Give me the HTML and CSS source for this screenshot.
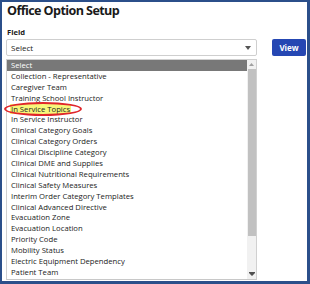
FILE: index.html
```html
<!DOCTYPE html>
<html>
<head>
<meta charset="utf-8">
<link rel="stylesheet" href="styles.css">
</head>
<body>
<div class="frame">
  <h1 class="title">Office Option Setup</h1>
  <div class="label">Field</div>
  <div class="controls">
    <div class="fieldcol">
      <div class="select">
        <span>Select</span>
        <svg class="caret" width="6" height="4" viewBox="0 0 6 4"><path d="M0 0H6L3 4Z" fill="#555"/></svg>
      </div>
      <div class="listbox">
        <div class="rows">
          <div class="row sel">Select</div>
          <div class="row">Collection - Representative</div>
          <div class="row">Caregiver Team</div>
          <div class="row">Training School Instructor</div>
          <div class="row"><span class="hl">In Service Topics</span></div>
          <div class="row">In Service Instructor</div>
          <div class="row">Clinical Category Goals</div>
          <div class="row">Clinical Category Orders</div>
          <div class="row">Clinical Discipline Category</div>
          <div class="row">Clinical DME and Supplies</div>
          <div class="row">Clinical Nutritional Requirements</div>
          <div class="row">Clinical Safety Measures</div>
          <div class="row">Interim Order Category Templates</div>
          <div class="row">Clinical Advanced Directive</div>
          <div class="row">Evacuation Zone</div>
          <div class="row">Evacuation Location</div>
          <div class="row">Priority Code</div>
          <div class="row">Mobility Status</div>
          <div class="row">Electric Equipment Dependency</div>
          <div class="row">Patient Team</div>
        </div>
        <div class="scrollbar">
          <svg class="arrow" width="5" height="3" viewBox="0 0 5 3"><path d="M0 3H5L2.5 0Z" fill="#a0a0a0"/></svg>
          <div class="thumb"></div>
          <div class="track"></div>
          <svg class="arrow" width="6" height="4" viewBox="0 0 6 4"><path d="M0 0H6V1H0Z M0 1H6L3 4Z" fill="#505050"/></svg>
        </div>
      </div>
    </div>
    <button class="view">View</button>
  </div>
  <div class="ring"></div>
</div>
</body>
</html>
```
FILE: styles.css
```css
html, body {
  margin: 0;
  padding: 0;
  background: #ffffff;
}
.frame {
  position: relative;
  width: 310px;
  height: 284px;
  box-sizing: border-box;
  border: 2px solid #2b4f8a;
  border-right-width: 3px;
  border-bottom-width: 3px;
  padding: 1px 0 0 4px;
  font-family: "Open Sans", "DejaVu Sans", sans-serif;
  color: #222;
  overflow: hidden;
}
.title {
  margin: 0;
  font-size: 12.6px;
  line-height: 16px;
  font-weight: 700;
  letter-spacing: -0.6px;
  color: #1a1a1a;
  padding-left: 1px;
}
.label {
  margin-top: 8px;
  font-size: 7.6px;
  line-height: 10px;
  font-weight: 700;
  color: #1a1a1a;
  padding-left: 1px;
}
.controls {
  display: flex;
  align-items: flex-start;
  gap: 15px;
  margin-top: 2px;
}
.fieldcol {
  display: flex;
  flex-direction: column;
  gap: 3px;
  width: 251px;
}
.select {
  height: 17px;
  box-sizing: border-box;
  border: 1px solid #cfcfcf;
  border-radius: 2px;
  display: flex;
  align-items: center;
  justify-content: space-between;
  padding: 0 5px 0 4px;
  font-size: 8px;
  color: #222;
}
.caret {
  display: block;
}
.listbox {
  height: 221px;
  box-sizing: border-box;
  border: 1px solid #d0d0d0;
  border-bottom-color: #c8c8c8;
  display: flex;
}
.rows {
  flex: 1;
}
.row {
  height: 10.9px;
  line-height: 10.9px;
  font-size: 7.7px;
  padding-left: 4px;
  white-space: nowrap;
  color: #222;
}
.row.sel {
  background: #787878;
  color: #fff;
}
.hl {
  background: #f7f77a;
  padding: 0 1px;
  margin-left: -1px;
}
.scrollbar {
  width: 9px;
  background: #f1f1f1;
  display: flex;
  flex-direction: column;
  align-items: center;
}
.arrow {
  display: block;
  margin: 3px 0;
}
.thumb {
  width: 8px;
  height: 167px;
  background: #c1c1c1;
}
.track {
  flex: 1;
}
.view {
  width: 34px;
  height: 17px;
  border: none;
  border-radius: 2px;
  background: #2547b3;
  color: #fff;
  font-family: "Open Sans", "DejaVu Sans", sans-serif;
  font-weight: 700;
  font-size: 8px;
  padding: 0;
}
.ring {
  position: absolute;
  left: 2px;
  top: 100px;
  width: 74px;
  height: 10px;
  border: 2px solid #e0262a;
  border-radius: 50%;
}
```
